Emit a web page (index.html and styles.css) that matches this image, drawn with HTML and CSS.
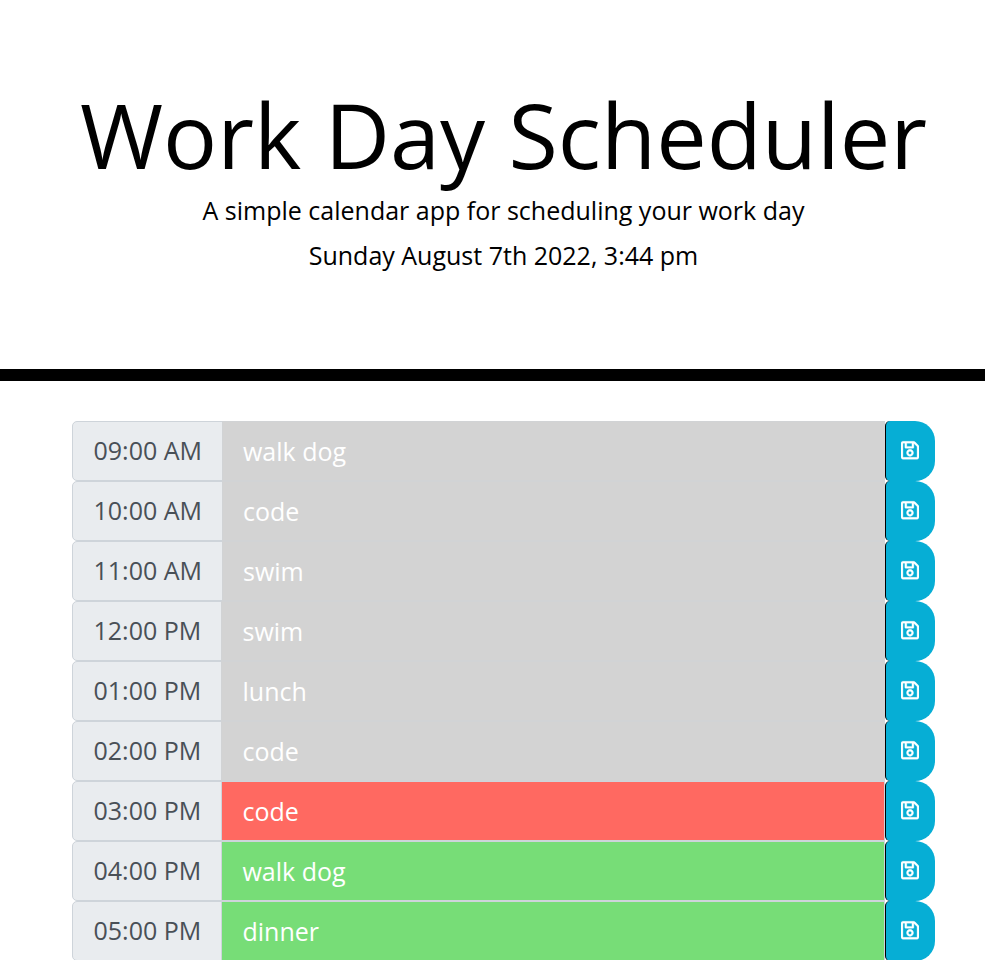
FILE: index.html
```html
<!DOCTYPE html>
<html lang="en">
<head>
<meta charset="utf-8">
<title>Work Day Scheduler</title>
<link rel="stylesheet" href="styles.css">
</head>
<body>
<svg class="sprite" aria-hidden="true"><symbol id="save" viewBox="0 0 448 512"><path d="M433.941 129.941l-83.882-83.882A48 48 0 0 0 316.118 32H48C21.49 32 0 53.49 0 80v352c0 26.51 21.49 48 48 48h352c26.51 0 48-21.49 48-48V163.882a48 48 0 0 0-14.059-33.941zM272 80v80H144V80h128zm122 352H54a6 6 0 0 1-6-6V86a6 6 0 0 1 6-6h42v104c0 13.255 10.745 24 24 24h176c13.255 0 24-10.745 24-24V83.882l78.243 78.243a6 6 0 0 1 1.757 4.243V426a6 6 0 0 1-6 6zM224 232c-48.523 0-88 39.477-88 88s39.477 88 88 88 88-39.477 88-88-39.477-88-88-88zm0 128c-22.056 0-40-17.944-40-40s17.944-40 40-40 40 17.944 40 40-17.944 40-40 40z"/></symbol></svg>
<div class="page">
<header class="hero">
<h1 class="title">Work Day Scheduler</h1>
<p class="lead">A simple calendar app for scheduling your work day</p>
<p class="lead">Sunday August 7th 2022, 3:44 pm</p>
</header>
<main class="schedule">
<div class="row"><span class="hour">09:00 AM</span><div class="task past">walk dog</div><button class="save"><svg class="icon"><use href="#save"/></svg></button></div>
<div class="row"><span class="hour">10:00 AM</span><div class="task past">code</div><button class="save"><svg class="icon"><use href="#save"/></svg></button></div>
<div class="row"><span class="hour">11:00 AM</span><div class="task past">swim</div><button class="save"><svg class="icon"><use href="#save"/></svg></button></div>
<div class="row pm"><span class="hour">12:00 PM</span><div class="task past">swim</div><button class="save"><svg class="icon"><use href="#save"/></svg></button></div>
<div class="row pm"><span class="hour">01:00 PM</span><div class="task past">lunch</div><button class="save"><svg class="icon"><use href="#save"/></svg></button></div>
<div class="row pm"><span class="hour">02:00 PM</span><div class="task past">code</div><button class="save"><svg class="icon"><use href="#save"/></svg></button></div>
<div class="row pm"><span class="hour">03:00 PM</span><div class="task present">code</div><button class="save"><svg class="icon"><use href="#save"/></svg></button></div>
<div class="row pm"><span class="hour">04:00 PM</span><div class="task future">walk dog</div><button class="save"><svg class="icon"><use href="#save"/></svg></button></div>
<div class="row pm"><span class="hour">05:00 PM</span><div class="task future">dinner</div><button class="save"><svg class="icon"><use href="#save"/></svg></button></div>
</main>
</div>
</body>
</html>
```
FILE: styles.css
```css
* { box-sizing: border-box; }
html, body { margin: 0; height: 960px; overflow: hidden; }
body { background: #fff; color: #000; font-family: "Open Sans", sans-serif; font-size: 25px; }
.sprite { display: none; }
.page { width: 1007px; }
.hero { height: 381px; padding-top: 80px; border-bottom: 12px solid #000; text-align: center; }
.title { margin: 0 0 3px; font-size: 90px; font-weight: 400; line-height: 108px; white-space: nowrap; }
.lead { margin: 0 0 7px; line-height: 38px; }
.schedule { width: 863px; margin: 40px auto 0; }
.row { display: flex; height: 60px; }
.hour { width: 151px; height: 60px; padding-left: 20.5px; border: 1px solid #ced4da; border-radius: 5px 0 0 5px; background: #e9ecef; color: #495057; line-height: 56px; white-space: nowrap; }
.pm .hour { width: 150px; }
.task { flex: 1; margin-left: -1px; padding-left: 20px; border: 1px solid #ced4da; color: #fff; line-height: 58px; }
.pm .task { padding-left: 20.5px; }
.past { background: #d3d3d3; border-color: #d1d3d5; }
.present { background: #ff6961; }
.future { background: #77dd77; }
.save { display: flex; align-items: center; justify-content: center; width: 50px; height: 60px; padding: 0 2px 1px 0; border: 0; border-left: 1px solid #000; border-radius: 5px 20px 20px 5px; background: #06aed5; color: #fff; }
.icon { width: 18px; height: 20.6px; fill: currentColor; stroke: currentColor; stroke-width: 8px; overflow: visible; }
```
